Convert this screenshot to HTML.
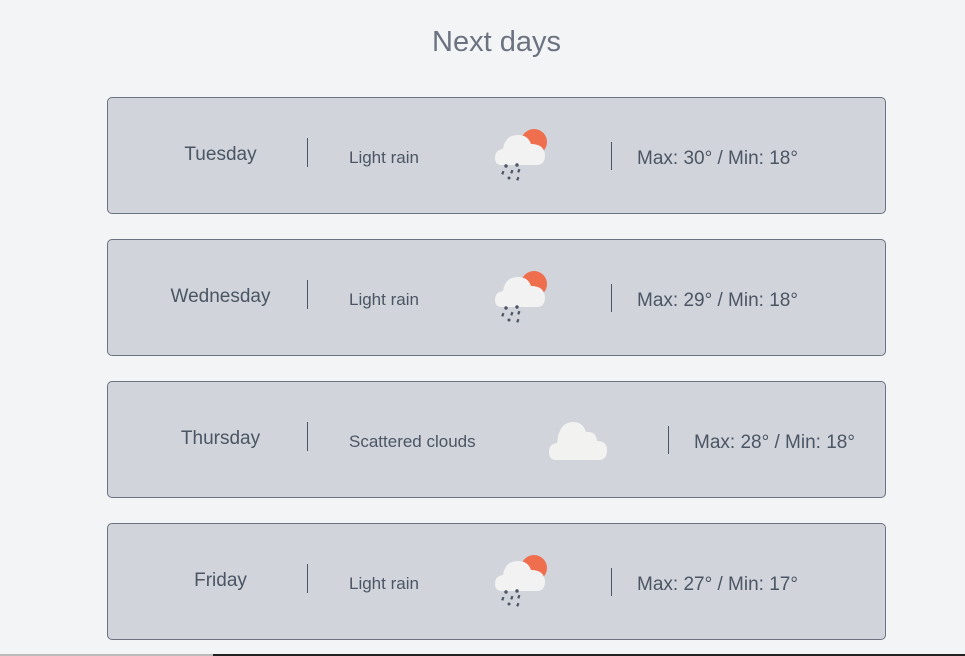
<!DOCTYPE html>
<html><head><meta charset="utf-8"><style>
body{margin:0;width:965px;height:656px;background:#f3f4f6;font-family:"Liberation Sans",sans-serif;position:relative;overflow:hidden;color:#4b5563}
h1{position:absolute;top:26px;left:14px;width:965px;text-align:center;margin:0;font-weight:normal;font-size:29px;color:#6b7280}
.card{position:absolute;left:107px;width:777px;height:115px;background:#d1d4db;border:1px solid #6b7280;border-radius:5px}
.t{position:absolute;white-space:nowrap}
.day{left:0;width:225px;text-align:center;font-size:19px;top:46px}
.d1{position:absolute;left:199px;top:40px;width:1px;height:29px;background:#4b5563}
.desc{left:241px;font-size:17px;top:50px}
.max{font-size:19px;top:50px}
.bot{position:absolute;top:654px;left:0;width:213px;height:2px;background:#bbb}
.bot2{position:absolute;top:654px;left:213px;width:752px;height:2px;background:#222}
</style></head><body>
<h1>Next days</h1>
<svg width="0" height="0" style="position:absolute"><defs>
<g id="rain">
<circle cx="39" cy="22" r="13" fill="#ee6e4d"/>
<path d="M7 45 Q0 45 0 38 Q0 30 8 29 Q10 15 23 15 Q33 15 36 24 Q49 24 50 35 Q50 45 42 45 Z" fill="#f2f2f2"/>
<g fill="#4b5563"><circle cx="11" cy="46" r="1.7"/><circle cx="22" cy="45" r="1.7"/>
<rect x="7" y="51" width="2.2" height="3.5" transform="rotate(20 8 52)"/><rect x="16" y="50" width="2.2" height="3.5" transform="rotate(20 17 51)"/><rect x="23" y="49" width="2.2" height="3.5" transform="rotate(20 24 50)"/>
<circle cx="14" cy="58" r="1.5"/><rect x="22" y="57" width="2.2" height="3.5" transform="rotate(20 23 58)"/></g>
</g>
<g id="cloud"><path d="M7 44 Q0 44 0 36 Q0 28 8 27 Q10 6 24 6 Q34 6 37 16 Q47 15 48 25 Q58 25 58 34 Q58 44 50 44 Z" fill="#f2f2f0"/></g>
</defs></svg>

<div class="card" style="top:97px"><div class="t day">Tuesday</div><div class="d1"></div><div class="t desc">Light rain</div>
<svg style="position:absolute;left:387px;top:22px" width="60" height="70"><use href="#rain"/></svg>
<div class="d1" style="left:503px;top:44px;height:28px"></div><div class="t max" style="left:529px">Max: 30° / Min: 18°</div></div>

<div class="card" style="top:239px"><div class="t day">Wednesday</div><div class="d1"></div><div class="t desc">Light rain</div>
<svg style="position:absolute;left:387px;top:22px" width="60" height="70"><use href="#rain"/></svg>
<div class="d1" style="left:503px;top:44px;height:28px"></div><div class="t max" style="left:529px">Max: 29° / Min: 18°</div></div>

<div class="card" style="top:381px"><div class="t day">Thursday</div><div class="d1"></div><div class="t desc">Scattered clouds</div>
<svg style="position:absolute;left:441px;top:34px" width="60" height="50"><use href="#cloud"/></svg>
<div class="d1" style="left:560px;top:44px;height:28px"></div><div class="t max" style="left:586px">Max: 28° / Min: 18°</div></div>

<div class="card" style="top:523px"><div class="t day">Friday</div><div class="d1"></div><div class="t desc">Light rain</div>
<svg style="position:absolute;left:387px;top:22px" width="60" height="70"><use href="#rain"/></svg>
<div class="d1" style="left:503px;top:44px;height:28px"></div><div class="t max" style="left:529px">Max: 27° / Min: 17°</div></div>
<div class="bot"></div><div class="bot2"></div>
</body></html>
